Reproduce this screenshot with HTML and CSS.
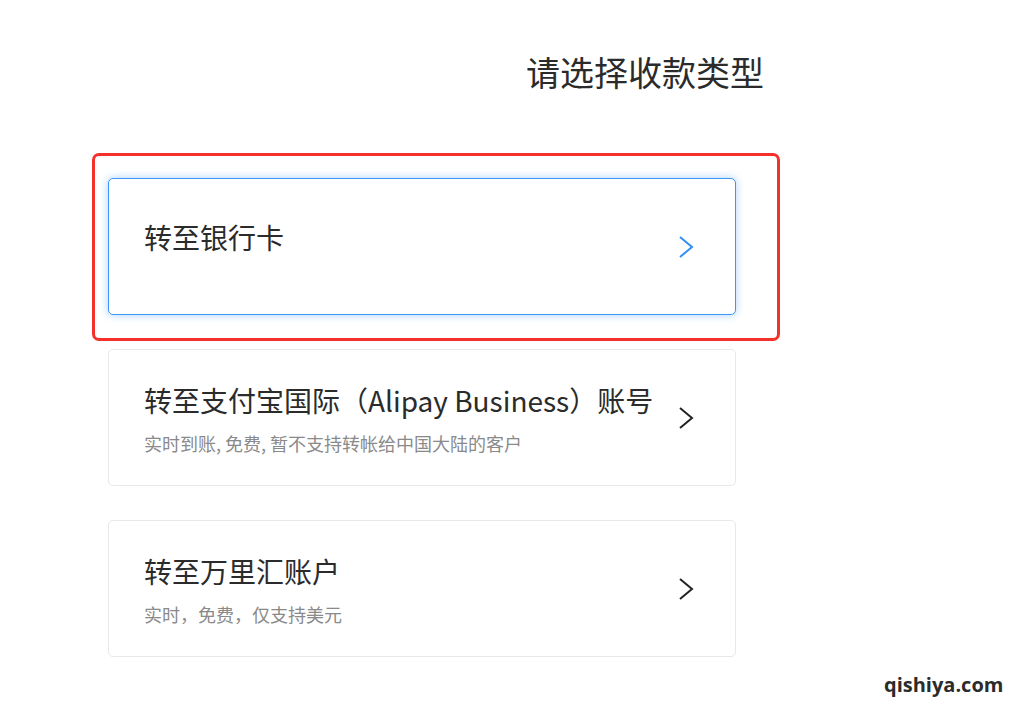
FILE: index.html
```html
<!DOCTYPE html>
<html lang="zh-CN">
<head>
<meta charset="utf-8">
<title>请选择收款类型</title>
<link rel="stylesheet" href="styles.css">
</head>
<body>
<div class="page">
  <h1 class="page-title">请选择收款类型</h1>
  <div class="options">
    <div class="highlight"></div>
    <div class="card card--active">
      <div class="card-text card-text--single">
        <div class="card-title">转至银行卡</div>
      </div>
      <svg class="chevron chevron--blue" viewBox="0 0 16 24" width="16" height="24"><path d="M2 2 L14 12 L2 22" fill="none" stroke="currentColor" stroke-width="2"/></svg>
    </div>
    <div class="card">
      <div class="card-text">
        <div class="card-title">转至支付宝国际（Alipay Business）账号</div>
        <div class="card-sub">实时到账, 免费, 暂不支持转帐给中国大陆的客户</div>
      </div>
      <svg class="chevron" viewBox="0 0 16 24" width="16" height="24"><path d="M2 2 L14 12 L2 22" fill="none" stroke="currentColor" stroke-width="2"/></svg>
    </div>
    <div class="card">
      <div class="card-text">
        <div class="card-title">转至万里汇账户</div>
        <div class="card-sub">实时，免费，仅支持美元</div>
      </div>
      <svg class="chevron" viewBox="0 0 16 24" width="16" height="24"><path d="M2 2 L14 12 L2 22" fill="none" stroke="currentColor" stroke-width="2"/></svg>
    </div>
  </div>
  <div class="watermark">qishiya.com</div>
</div>
</body>
</html>
```
FILE: styles.css
```css
html, body {
  margin: 0;
  padding: 0;
  background: #ffffff;
}
body {
  font-family: "PingFang SC", "Noto Sans CJK SC", "Noto Sans", sans-serif;
  color: #333333;
}
.page {
  position: relative;
  width: 1024px;
  height: 717px;
  overflow: hidden;
}
.page-title {
  margin: 0;
  padding: 48px 0 0 526px;
  font-size: 34px;
  line-height: 48px;
  font-weight: 400;
  color: #2b2b2b;
}
.options {
  position: relative;
  margin: 82px 0 0 108px;
  width: 628px;
  display: flex;
  flex-direction: column;
  gap: 34px;
}
.highlight {
  position: absolute;
  left: -16px;
  top: -25px;
  width: 682px;
  height: 182px;
  border: 3px solid #f5302a;
  border-radius: 7px;
  pointer-events: none;
}
.card {
  box-sizing: border-box;
  height: 137px;
  border: 1px solid #e8e8e8;
  border-radius: 5px;
  background: #fff;
  display: flex;
  align-items: center;
  justify-content: space-between;
  padding: 0 41px 0 35px;
}
.card--active {
  border-color: #3d97f6;
  box-shadow: 0 0 9px rgba(45, 140, 240, 0.4);
}
.card-text {
  align-self: flex-start;
  padding-top: 30px;
}
.card-text--single {
  padding-top: 38px;
}
.card-title {
  font-size: 28px;
  line-height: 40px;
  color: #2b2b2b;
  white-space: nowrap;
}
.card-sub {
  margin-top: 10px;
  font-size: 18px;
  line-height: 26px;
  color: #8a8a8a;
  white-space: nowrap;
}
.chevron {
  flex: none;
  color: #222;
}
.chevron--blue {
  color: #2f8ff3;
}
.watermark {
  position: absolute;
  left: 884px;
  top: 671px;
  font-family: "Open Sans", "DejaVu Sans", sans-serif;
  font-weight: 700;
  font-size: 20px;
  line-height: 28px;
  color: #2b2b2b;
}
```
